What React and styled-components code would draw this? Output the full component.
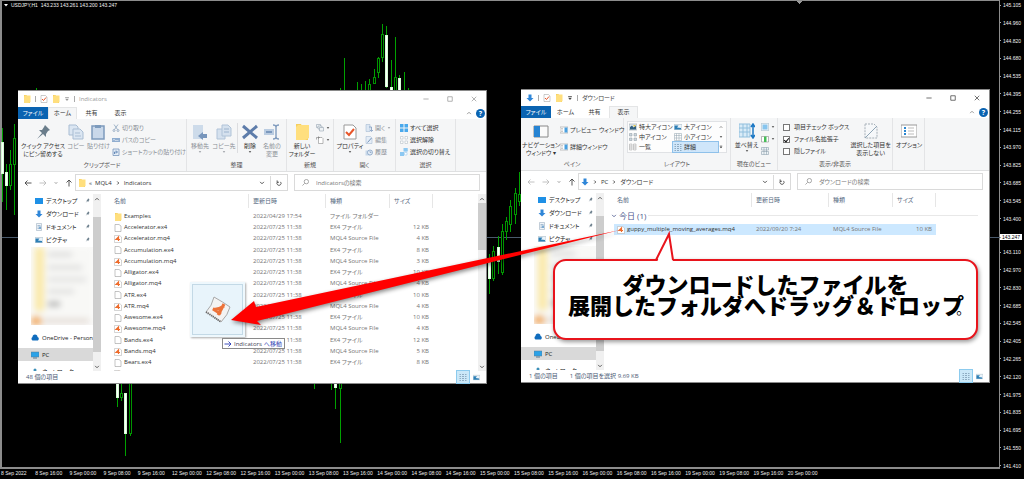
import styled, { createGlobalStyle, css } from 'styled-components';

const GlobalStyle = createGlobalStyle`
  * { box-sizing: border-box; }
  body {
    margin: 0;
    background: #000;
    font-family: 'Open Sans', 'Noto Sans CJK JP', sans-serif;
    font-size: 6px;
    line-height: 8px;
    font-feature-settings: 'palt';
    color: #333;
  }
  button, input {
    font: inherit;
    font-feature-settings: inherit;
    color: inherit;
    margin: 0;
    padding: 0;
    border: 0;
    background: none;
  }
`;

/* ---------- chart ---------- */

const Screen = styled.main`
  position: relative;
  display: grid;
  grid-template-columns: minmax(0, 1fr) 24px;
  grid-template-rows: 1fr 10px;
  min-height: 100vh;
  overflow: hidden;
  background: #000;
`;

const ChartArea = styled.section`
  border: solid #8c8c8c;
  border-width: 1px 1px 2px 2px;
  min-width: 0;
`;

const ChartTitle = styled.header`
  display: flex;
  gap: 3px;
  height: 8px;
  padding-left: 2px;
  font: 5px/8px 'Liberation Sans', sans-serif;
  color: #f4f4f4;
  white-space: pre;
`;

const Layer = styled.svg`
  position: absolute;
  top: 0;
  left: 0;
  pointer-events: none;
`;

const PriceAxis = styled.ol`
  grid-row: 1 / 3;
  grid-column: 2;
  display: flex;
  flex-direction: column;
  justify-content: space-between;
  margin: 1px 0 9px;
  padding: 0;
  list-style: none;
  font: 5px/8px 'Liberation Sans', sans-serif;
  color: #f0f0f0;
`;

const Price = styled.li`
  display: flex;
  align-items: center;
  height: 8px;
  gap: 2px;
  &::before {
    content: '';
    width: 1px;
    height: 1px;
    background: #aaa;
  }
  ${p => p.$current && css`
    position: relative;
    top: 2px;
    height: 6px;
    gap: 1px;
    margin-right: 2px;
    background: #fff;
    color: #000;
  `}
`;

const TimeAxis = styled.ol`
  grid-row: 2;
  grid-column: 1;
  display: grid;
  grid-template-columns: repeat(24, 1fr);
  margin: 0 178px 0 0;
  padding: 0 0 0 1px;
  list-style: none;
  font: 5px/9px 'Liberation Sans', sans-serif;
  color: #f0f0f0;
  white-space: nowrap;
`;

const prices = [
  '145.105', '144.960', '144.820', '144.680', '144.535', '144.395', '144.255', '144.115', '143.970',
  '143.825', '143.685', '143.545', '143.400', '143.247', '143.110', '142.970', '142.830', '142.685',
  '142.545', '142.405', '142.265', '142.120', '141.975', '141.835', '141.695', '141.550', '141.410',
];

const days = ['8', '9', '12', '13', '14', '15', '16', '19', '20'];
const times = days
  .flatMap(day => ['00:00', '08:00', '16:00'].map(hour => `${day} Sep ${hour}`))
  .slice(1, 25);
times[0] = '8 Sep 2022';

// x, high, low, body top, body bottom, falling
const candles = [
  [2, 128, 202, 142, 174, 1], [6, 164, 210, 172, 186, 1], [10, 150, 190, 164, 186, 0],
  [14, 124, 215, 138, 165, 0], [36, 88, 92],
  [117, 380, 407, 380, 398, 1], [121, 380, 401, 393, 398, 0], [125, 393, 456, 393, 434, 1],
  [130, 380, 436, 380, 434, 0],
  [314, 380, 389], [331, 380, 390], [335, 380, 409, 380, 388, 1], [340, 380, 443, 380, 389, 0],
  [340, 88, 92], [344, 58, 92], [357, 82, 92], [361, 84, 92], [365, 81, 92],
  [369, 79, 92, 84, 92, 0], [374, 69, 84, 77, 84, 0], [378, 57, 78, 58, 73, 0],
  [382, 24, 62, 34, 58, 0], [386, 26, 88, 35, 87, 1], [391, 60, 92, 87, 92, 1],
  [395, 37, 92, 77, 92, 0], [399, 75, 92, 78, 92, 1], [404, 72, 92], [408, 88, 92],
  [489, 254, 294, 262, 279, 1], [493, 246, 281, 251, 279, 0], [498, 236, 274, 247, 262, 1],
  [502, 224, 275, 231, 273, 0], [506, 217, 240, 221, 232, 0], [510, 200, 232, 206, 225, 0],
  [515, 188, 224, 193, 215, 0], [519, 172, 206, 194, 202, 0],
];

const Candles = () => (
  <Layer width="1024" height="470" shapeRendering="crispEdges" aria-hidden="true">
    <path d="M2 237H1000" stroke="#4a5a6c" />
    <path d="M796 1h6l-3 3z" fill="#999" />
    {candles.map(([x, high, low, top, bottom, falling]) => (
      <g key={`${x}-${high}`} stroke="#00a000">
        <path d={`M${x + 0.5} ${high}V${low}`} />
        {top && (
          <rect
            x={x - 0.5}
            y={top + 0.5}
            width="2"
            height={bottom - top - 1}
            fill={falling ? '#fff' : '#000'}
            stroke={falling ? '#d6ffd6' : '#009400'}
          />
        )}
      </g>
    ))}
  </Layer>
);

/* ---------- icons ---------- */

const drawings = {
  folder: <><path d="M2 0h5l1 2h6v14H2z" fill="#f5cf5f" /><path d="M4 1h11v13l-4 2H2V3z" fill="#ffdf7e" /></>,
  doc: <path d="M2 1h8l4 3v11H2z" fill="#fff" stroke="#888" />,
  mq4: <><path d="M1 1h10l4 3v11H1z" fill="#fff" stroke="#aaa" /><path d="M9 12V4L4 9h8" fill="none" stroke="#ee6c2c" strokeWidth="2.4" /></>,
  check: <><path d="M2 1h9l3 3v11H2z" fill="#fff" stroke="#999" /><path d="M4 8l3 3 5-6" fill="none" stroke="#e8562a" strokeWidth="2" /></>,
  down: <path d="M5 1h6v7h4l-7 7-7-7h4z" fill="#2f86d8" />,
  desktop: <path d="M0 2h16v12H0z" fill="#1e90e6" />,
  document: <><path d="M3 1h10v14H3z" fill="#f1f5f9" stroke="#8fa3b6" /><path d="M5 5h6M5 8h3M5 11h6" stroke="#5d87ad" /><path d="M8 7h4v5H8z" fill="#7dabd2" /></>,
  picture: <><path d="M0 3h16v10H0z" fill="#eaf3fa" stroke="#9fb0bd" /><path d="M1 5h8l-3 4 8 1v3H1z" fill="#2d7fb5" /></>,
  pin: <path d="M10 1l5 5-2 1-2 3 0 3-3-3-6 5 5-6-3-3h3l2-3z" fill="#6a7d8b" />,
  cloud: <path d="M3 13a4 4 0 010-7 5 5 0 0110 0 4 4 0 011 7z" fill="#0f6cbd" />,
  pc: <><path d="M0 2h16v10H0z" fill="#2ba2e8" stroke="#5c7a90" /><path d="M4 14h8" stroke="#5c7a90" strokeWidth="2" /></>,
  network: <><path d="M3 6h12v7H3z" fill="#4aa8dc" /><circle cx="8" cy="4" r="3" fill="#3c8fb8" /></>,
  copy: <g fill="#dbe6f2" stroke="#a9bdd3"><path d="M1 1h7l2 2v8H1z" /><path d="M5 5h7l3 3v7H5z" /><path d="M7 9h5M7 12h6" /></g>,
  paste: <><path d="M2 2h12v13H2z" fill="#c9d8ea" stroke="#7d9bbd" strokeWidth="1.5" /><path d="M5 1h6v3H5z" fill="#7d9bbd" /></>,
  cut: <g fill="none" stroke="#8ca3bd" strokeWidth="1.6"><path d="M4 1l7 10M12 1L5 11" /><circle cx="4" cy="13" r="2" /><circle cx="12" cy="13" r="2" /></g>,
  path: <><path d="M0 4h16v8H0z" fill="#91aed0" /><path d="M2 9l2-3 2 3h7" stroke="#fff" fill="none" /></>,
  shortcut: <><path d="M2 2h12v13H2z" fill="#e6eef7" stroke="#7191b8" strokeWidth="1.5" /><path d="M5 12V8h5M8 5l3 3-3 3" fill="none" stroke="#4a73a8" strokeWidth="1.6" /></>,
  moveTo: <><path d="M1 1h10v14H1z" fill="#cddbea" /><path d="M15 10v4h-4v2l-5-4 5-4v2z" fill="#7896bc" /></>,
  copyTo: <><g fill="#d5e1ee" stroke="#b0c3d8"><path d="M1 5h8v10H1z" /><path d="M6 1h6l3 3v8H6z" /></g><path d="M8 5h5M8 8h5" stroke="#9cb3cd" /></>,
  remove: <path d="M1 2l14 12M15 2L1 14" stroke="#5d7caa" strokeWidth="3" />,
  rename: <><path d="M0 5h10v6H0z" fill="#bacce1" /><path d="M2 8h6" stroke="#7b98bd" strokeWidth="2" /><path d="M9 1q3 0 3 2v10q0 2-3 2M15 1q-3 0-3 2v10q0 2 3 2" fill="none" stroke="#819cbe" strokeWidth="1.4" /></>,
  newItem: <g fill="#eef2f5" stroke="#8796a4"><path d="M1 1h8v6H1z" /><path d="M4 4h8v6H4z" /><path d="M7 7h8v7H7z" /></g>,
  access: <><path d="M5 3h7l2 2v10H5z" fill="#fff" stroke="#777" /><path d="M1 7V3h5M4 1l3 2-3 2" fill="none" stroke="#666" /></>,
  openFile: <><path d="M2 1h8v14H2z" fill="#dce7f3" stroke="#9bb2cc" /><path d="M8 6h5v8M10 12l3 3 3-3" fill="none" stroke="#7896bc" strokeWidth="1.5" /></>,
  edit: <><path d="M2 1h9l3 3v11H2z" fill="#e5edf6" stroke="#9bb2cc" /><path d="M5 13l8-9" stroke="#7896bc" strokeWidth="2" /></>,
  history: <><path d="M1 5h8l2 2v8H1z" fill="#c8d8e9" /><circle cx="10" cy="9" r="5" fill="#e5edf6" stroke="#7f9cc0" strokeWidth="1.5" /><path d="M10 6v3h3" fill="none" stroke="#5d80ad" /></>,
  selectAll: <g fill="#4aa9ec"><path d="M0 0h7v7H0zM9 0h7v7H9zM0 9h7v7H0zM9 9h7v7H9z" /></g>,
  selectNone: <g fill="#fff" stroke="#aab4bd"><path d="M1 1h5v5H1zM10 1h5v5h-5zM1 10h5v5H1zM10 10h5v5h-5z" /></g>,
  invert: <><path d="M1 9h5v6H1zM9 1h6v5H9z" fill="#fff" stroke="#8fc2e8" /><path d="M7 0h8v7H7zM0 8h8v8H0z" fill="#8cc8f2" /><path d="M9 9h5v5H9z" fill="#fff" stroke="#8fc2e8" /></>,
  navPane: <><path d="M1 3h14v11H1z" fill="#fafafa" stroke="#888" /><path d="M1 3h6v11H1z" fill="#2684d3" /></>,
  previewPane: <><path d="M0 2h16v12H0z" fill="#fff" stroke="#888" /><path d="M9 3h6v10H9z" fill="#49a0e0" /><path d="M2 5h4M2 8h4M2 11h4" stroke="#999" /></>,
  largeIcon: <><path d="M0 2h16v12H0z" fill="#e4ebef" stroke="#8b969e" /><path d="M2 8l4-3 3 4 5-4v8H2z" fill="#305f80" /><path d="M9 4h4v3H9z" fill="#e3c94a" /></>,
  mediumIcon: <g fill="#ccd6de" stroke="#8b969e"><path d="M1 1h5v5H1zM10 1h5v5h-5zM1 10h5v5H1zM10 10h5v5h-5z" /></g>,
  smallIcon: <g fill="none" stroke="#8fa0ad"><path d="M1 1h14v14H1zM1 5h14M1 10h14M5 1v14M10 1v14" /></g>,
  list: <g fill="#f4f4f4" stroke="#a0a0a0"><path d="M1 2h5v12H1zM9 2h5v12H9zM1 6h5M1 10h5M9 6h5M9 10h5" /></g>,
  details: <path d="M1 3h3M6 3h4M12 3h3M1 7h3M6 7h4M12 7h3M1 11h3M6 11h4M12 11h3M1 15h3M6 15h4M12 15h3" stroke="#7f9cb4" strokeWidth="1.6" />,
  sort: <><path d="M0 1h11v13H0z" fill="#d9ebf7" /><path d="M0 1h11v13H0zM0 5h11M0 9h11M4 1v13M8 1v13" fill="none" stroke="#91bfdd" /><path d="M14 1v14M12 4l2-3 2 3M12 12l2 3 2-3" fill="none" stroke="#1d78c4" strokeWidth="1.5" /></>,
  group: <><path d="M3 3h10v10H3z" fill="#87c5ee" /><path d="M0 1h16M0 15h16M1 1v14M15 1v14" stroke="#9cb8c9" /></>,
  addColumn: <><path d="M1 3h14v11H1z" fill="#fff" stroke="#777" /><path d="M6 3h5v11H6z" fill="#44bd57" /></>,
  fitColumn: <><path d="M1 1h14v5H1zM1 9h14v6H1z" fill="#eef3f6" stroke="#7d92a2" /><path d="M6 1v14M11 1v14" stroke="#7d92a2" /></>,
  hide: <><path d="M2 1h9l3 3v11H2z" fill="#f6f8fa" stroke="#a5afb7" strokeDasharray="2 1" /><path d="M2 15L14 3" stroke="#8fa5b5" /></>,
  options: <><path d="M0 2h16v12H0z" fill="#fff" stroke="#999" /><path d="M3 5h2M3 8h2M3 11h2" stroke="#2a86d0" strokeWidth="2" /><path d="M7 5h6M7 8h6M7 11h6" stroke="#bbb" /></>,
  back: <path d="M15 8H2M7 3L2 8l5 5" fill="none" stroke="currentColor" strokeWidth="1.8" />,
  forward: <path d="M1 8h13M9 3l5 5-5 5" fill="none" stroke="currentColor" strokeWidth="1.8" />,
  upward: <path d="M8 15V2M3 7l5-5 5 5" fill="none" stroke="currentColor" strokeWidth="1.8" />,
  chevron: <path d="M3 5l5 5 5-5" fill="none" stroke="currentColor" strokeWidth="2.2" />,
  chevronUp: <path d="M3 11l5-5 5 5" fill="none" stroke="currentColor" strokeWidth="2.2" />,
  chevronRight: <path d="M6 4l4 4-4 4" fill="none" stroke="currentColor" strokeWidth="2.2" />,
  caret: <path d="M3 5h10l-5 6z" fill="currentColor" />,
  customize: <path d="M3 3h10v2H3zM3 7h10l-5 6z" fill="currentColor" />,
  refresh: <path d="M4 5a5.5 5.5 0 108 0M3 1v5h5" fill="none" stroke="currentColor" strokeWidth="2" />,
  search: <><circle cx="10" cy="6" r="5" fill="none" stroke="currentColor" strokeWidth="1.4" /><path d="M6 10l-5 5" stroke="currentColor" strokeWidth="1.4" /></>,
  minimize: <path d="M1 8h14" stroke="currentColor" strokeWidth="2" />,
  maximize: <path d="M2 2h12v12H2z" fill="none" stroke="currentColor" strokeWidth="2" />,
  close: <path d="M2 2l12 12M14 2L2 14" stroke="currentColor" strokeWidth="2" />,
};

const Icon = ({ name, size = 8 }) => (
  <svg width={size} height={size} viewBox="0 0 16 16" aria-hidden="true">{drawings[name]}</svg>
);

/* ---------- explorer window ---------- */

const Desktop = styled.div`
  display: flex;
  align-items: flex-start;
  gap: 34px;
  padding: 80px 9px 0 16px;
`;

const Window = styled.article`
  position: relative;
  flex: 1;
  min-width: 0;
  margin-top: ${p => (p.$lower ? 1 : 0)}px;
  border: 1px solid #8a8a8a;
  border-width: 1px 1px 1px 0;
  background: #fff;
  white-space: nowrap;
  svg { display: block; flex: none; }
`;

const TitleBar = styled.header`
  display: flex;
  align-items: center;
  gap: 4px;
  height: 16px;
  padding-left: 5px;
  color: ${p => (p.$active ? '#444' : '#999')};
`;

const Divider = styled.span`
  width: 1px;
  height: 6px;
  background: #aaa;
`;

const WindowButtons = styled.div`
  display: flex;
  margin-left: auto;
  button {
    display: grid;
    place-items: center;
    width: 24px;
    height: 16px;
  }
`;

const Tabs = styled.nav`
  display: flex;
  align-items: center;
  height: 12px;
`;

const Tab = styled.button`
  width: ${p => (p.$file ? 30 : 29)}px;
  height: 12px;
  line-height: 11px;
  ${p => p.$file && 'background: #0a63b1; color: #fff;'}
  ${p => p.$selected && 'background: #f5f6f7; border: 1px solid #e4e5e6; border-bottom: 0;'}
`;

const TabTools = styled.div`
  display: flex;
  align-items: center;
  gap: 4px;
  margin-left: auto;
  padding-right: 1px;
  color: #888;
`;

const Help = styled.button`
  width: 9px;
  height: 9px;
  border-radius: 50%;
  background: #0a63b1;
  color: #fff;
  font-weight: 700;
  font-size: 7px;
  line-height: 9px;
`;

const Ribbon = styled.div`
  display: flex;
  height: 53px;
  background: #f5f6f7;
  border-bottom: 1px solid #dfe0e1;
`;

const Group = styled.section`
  display: flex;
  flex-direction: column;
  width: ${p => p.$width}px;
  border-right: 1px solid #e3e4e6;
  footer {
    height: 10px;
    line-height: 9px;
    text-align: center;
    color: #555;
  }
`;

const GroupBody = styled.div`
  display: flex;
  height: 42px;
  padding: 3px 0 0 ${p => p.$indent ?? 2}px;
`;

const BigButton = styled.button`
  display: flex;
  flex-direction: column;
  align-items: center;
  width: ${p => p.$width || 24}px;
  padding-top: 2px;
  color: ${p => (p.$off ? '#8a8f96' : '#333')};
  svg:first-child { margin-bottom: 2px; }
`;

const Stack = styled.div`
  display: flex;
  flex-direction: column;
  padding-left: ${p => p.$indent || 0}px;
`;

const SmallButton = styled.button`
  display: flex;
  align-items: center;
  gap: 2px;
  height: ${p => (p.$tall ? 17 : 12)}px;
  color: ${p => (p.$off ? '#8a8f96' : '#333')};
`;

const Split = styled.span`
  width: 1px;
  height: 30px;
  margin: 1px 1px 0;
  background: #dcdde0;
`;

const Gallery = styled.div`
  display: grid;
  grid-template-columns: 45px 45px 8px;
  grid-auto-rows: 10px;
  width: 100px;
  height: 32px;
  border: 1px solid #e0e2e5;
  background: #fdfdfd;
`;

const GalleryItem = styled.button`
  display: flex;
  align-items: center;
  gap: 2px;
  padding-left: 1px;
  ${p => p.$selected && 'background: #cfe6fa; outline: 1px solid #8fc1ea;'}
`;

const CheckLabel = styled.label`
  display: flex;
  align-items: center;
  gap: 4px;
  height: 12px;
`;

const CheckBox = styled.input`
  appearance: none;
  display: grid;
  place-items: center;
  width: 7px;
  height: 7px;
  border: 1px solid #777;
  background: #fff;
  &:checked::before {
    content: '';
    width: 2px;
    height: 4px;
    border: solid #111;
    border-width: 0 1px 1px 0;
    transform: rotate(40deg);
  }
`;

const AddressRow = styled.div`
  display: flex;
  align-items: center;
  height: 22px;
  padding: 0 6px 1px 0;
`;

const History = styled.div`
  display: flex;
  align-items: center;
  gap: 7px;
  width: 57px;
  padding-left: 6px;
  color: #444;
  button:disabled { color: #bbb; }
`;

const AddressBar = styled.div`
  display: flex;
  align-items: center;
  flex: 216;
  gap: 3px;
  height: 17px;
  margin-right: 6px;
  padding-left: 2px;
  border: 1px solid #dadada;
  > button:nth-last-child(2) { margin-left: auto; padding-right: 2px; }
  > button:last-child { padding: 4px 5px; border-left: 1px solid #dadada; }
`;

const SearchBox = styled.label`
  display: flex;
  align-items: center;
  flex: 183;
  gap: 7px;
  height: 17px;
  padding-left: 7px;
  border: 1px solid #dadada;
  color: #777;
  input { flex: 1; min-width: 0; outline: 0; }
  input::placeholder { color: #777; }
`;

const Body = styled.div`
  display: flex;
  height: 177px;
  overflow: hidden;
`;

const Side = styled.nav`
  width: 75px;
`;

const SideItem = styled.a`
  display: flex;
  align-items: center;
  gap: 3px;
  height: 13px;
  padding-left: ${p => (p.$root ? 13 : 17)}px;
  padding-right: 3px;
  margin-bottom: ${p => (p.$root ? 4 : 0)}px;
  overflow: hidden;
  color: #222;
  text-decoration: none;
  ${p => p.$selected && 'background: #d9d9d9;'}
  span + svg { margin-left: auto; }
`;

const Blurred = styled.div`
  height: 78px;
  margin: 1px 0 6px 13px;
  overflow: hidden;
  background: #fafafa;
  &::before {
    content: '';
    display: block;
    height: 78px;
    filter: blur(3px);
    background:
      radial-gradient(circle at 5px 75px, #f0a860 0 5px, transparent 6px),
      linear-gradient(#fbe9a8, #fbe9a8) 4px 0 / 9px 64px no-repeat,
      linear-gradient(#cfcfcf, #cfcfcf) 17px 6px / 24px 3px no-repeat,
      linear-gradient(#d2d2d2, #d2d2d2) 17px 19px / 34px 3px no-repeat,
      linear-gradient(#d6d6d6, #d6d6d6) 17px 31px / 38px 3px no-repeat,
      linear-gradient(#d2d2d2, #d2d2d2) 17px 43px / 26px 3px no-repeat,
      linear-gradient(#a5a5a5, #a5a5a5) 17px 55px / 12px 4px no-repeat,
      linear-gradient(#e0d6cf, #e0d6cf) 12px 72px / 46px 4px no-repeat,
      #f8f8f6;
  }
`;

const Scroll = styled.div`
  display: flex;
  flex-direction: column;
  align-items: center;
  justify-content: space-between;
  width: 8px;
  padding: 2px 0 1px;
  background: #f0f0f0;
  color: #444;
`;

const Thumb = styled.span`
  width: 8px;
  height: ${p => p.$size}px;
  margin-bottom: auto;
  margin-top: ${p => p.$offset}px;
  background: #cdcdcd;
`;

const Files = styled.div`
  flex: 1;
  min-width: 0;
  padding-left: 10px;
`;

const FileTable = styled.table`
  width: 322px;
  table-layout: fixed;
  border-spacing: 0;
  color: #757575;
  th {
    height: 14px;
    padding: 0 0 0 4px;
    border-right: 1px solid #e6e6e6;
    text-align: left;
    font-weight: 400;
    color: #56697f;
  }
  td {
    height: 11px;
    padding: 0 0 0 4px;
    line-height: 11px;
  }
  th:first-child, td:first-child { padding-left: 3px; }
  td:last-child { padding: 0 4px 0 0; text-align: right; }
  tbody tr:nth-child(4n) td { height: 12px; }
  tbody::before {
    content: '';
    display: block;
    height: ${p => (p.$grouped ? 0 : 3)}px;
  }
`;

const FileName = styled.span`
  display: flex;
  align-items: center;
  gap: 2px;
  color: #333;
`;

const FileRow = styled.tr`
  ${p => p.$selected && 'background: #cce8ff;'}
`;

const DayHeading = styled.td`
  && {
    height: 17px;
    padding: 0;
    font-size: 8px;
    text-align: left;
    color: #48558c;
  }
  > div {
    display: flex;
    align-items: center;
    gap: 2px;
    margin: 0 -46px 0 -3px;
  }
  > div::after {
    content: '';
    flex: 1;
    height: 1px;
    background: #e8e8e8;
  }
`;

const StatusBar = styled.footer`
  display: flex;
  align-items: center;
  gap: 12px;
  height: 12px;
  padding: 0 4px 0 8px;
  color: #4a5a75;
`;

const Views = styled.div`
  display: flex;
  align-items: center;
  gap: 2px;
  margin-left: auto;
  button { padding: 2px; }
  button:first-child { background: #cbe8f8; outline: 1px solid #8ccbee; }
`;

const Big = ({ icon, lines, caret, ...rest }) => (
  <BigButton {...rest}>
    <Icon name={icon} size={16} />
    {lines.map(line => <span key={line}>{line}</span>)}
    {caret && <Icon name="caret" size={4} />}
  </BigButton>
);

const Small = ({ icon, children, caret, ...rest }) => (
  <SmallButton {...rest}>
    <Icon name={icon} />
    {children}
    {caret && <Icon name="caret" size={4} />}
  </SmallButton>
);

const RibbonGroup = ({ label, width, indent, children }) => (
  <Group $width={width}>
    <GroupBody $indent={indent}>{children}</GroupBody>
    <footer>{label}</footer>
  </Group>
);

const HomeRibbon = () => (
  <Ribbon>
    <RibbonGroup label="クリップボード" width={169} indent={2}>
      <Big icon="pin" lines={['クイック アクセス', 'にピン留めする']} $width={46} />
      <Big icon="copy" lines={['コピー']} $width={20} $off />
      <Big icon="paste" lines={['貼り付け']} $width={25} $off />
      <Stack $indent={1}>
        <Small icon="cut" $off>切り取り</Small>
        <Small icon="path" $off>パスのコピー</Small>
        <Small icon="shortcut" $off>ショートカットの貼り付け</Small>
      </Stack>
    </RibbonGroup>
    <RibbonGroup label="整理" width={100} indent={1}>
      <Big icon="moveTo" lines={['移動先']} caret $off />
      <Big icon="copyTo" lines={['コピー先']} caret $off />
      <Split />
      <Big icon="remove" lines={['削除']} caret $width={22} />
      <Big icon="rename" lines={['名前の', '変更']} $width={22} $off />
    </RibbonGroup>
    <RibbonGroup label="新規" width={47}>
      <Big icon="folder" lines={['新しい', 'フォルダー']} $width={26} />
      <Stack $indent={1}>
        <Small icon="newItem" caret aria-label="新しいアイテム" />
        <Small icon="access" caret aria-label="ショートカット" />
      </Stack>
    </RibbonGroup>
    <RibbonGroup label="開く" width={62}>
      <Big icon="check" lines={['プロパティ']} caret $width={28} />
      <Stack $indent={1}>
        <Small icon="openFile" caret $off>開く</Small>
        <Small icon="edit" $off>編集</Small>
        <Small icon="history" $off>履歴</Small>
      </Stack>
    </RibbonGroup>
    <RibbonGroup label="選択" width={60} indent={4}>
      <Stack>
        <Small icon="selectAll">すべて選択</Small>
        <Small icon="selectNone">選択解除</Small>
        <Small icon="invert">選択の切り替え</Small>
      </Stack>
    </RibbonGroup>
  </Ribbon>
);

const ViewRibbon = () => (
  <Ribbon>
    <RibbonGroup label="ペイン" width={103} indent={1}>
      <Big icon="navPane" lines={['ナビゲーション', 'ウィンドウ ▾']} $width={38} />
      <Stack>
        <Small icon="previewPane" $tall>プレビュー ウィンドウ</Small>
        <Small icon="previewPane" $tall>詳細ウィンドウ</Small>
      </Stack>
    </RibbonGroup>
    <RibbonGroup label="レイアウト" width={107} indent={3}>
      <Gallery>
        <GalleryItem><Icon name="largeIcon" />特大アイコン</GalleryItem>
        <GalleryItem><Icon name="picture" />大アイコン</GalleryItem>
        <GalleryItem aria-label="上へ"><Icon name="chevronUp" size={4} /></GalleryItem>
        <GalleryItem><Icon name="mediumIcon" />中アイコン</GalleryItem>
        <GalleryItem><Icon name="smallIcon" />小アイコン</GalleryItem>
        <GalleryItem aria-label="下へ"><Icon name="caret" size={4} /></GalleryItem>
        <GalleryItem><Icon name="list" />一覧</GalleryItem>
        <GalleryItem $selected><Icon name="details" />詳細</GalleryItem>
        <GalleryItem aria-label="その他"><Icon name="customize" size={4} /></GalleryItem>
      </Gallery>
    </RibbonGroup>
    <RibbonGroup label="現在のビュー" width={47}>
      <Big icon="sort" lines={['並べ替え']} caret $width={27} />
      <Stack $indent={1}>
        <Small icon="group" caret aria-label="グループ化" />
        <Small icon="addColumn" caret aria-label="列の追加" />
        <Small icon="fitColumn" aria-label="列のサイズ" />
      </Stack>
    </RibbonGroup>
    <RibbonGroup label="表示/非表示" width={115} indent={5}>
      <Stack>
        <CheckLabel><CheckBox type="checkbox" />項目チェック ボックス</CheckLabel>
        <CheckLabel><CheckBox type="checkbox" defaultChecked />ファイル名拡張子</CheckLabel>
        <CheckLabel><CheckBox type="checkbox" />隠しファイル</CheckLabel>
      </Stack>
      <Big icon="hide" lines={['選択した項目を', '表示しない']} $width={44} />
    </RibbonGroup>
    <RibbonGroup width={32} indent={2}>
      <Big icon="options" lines={['オプション']} $width={28} />
    </RibbonGroup>
  </Ribbon>
);

const quickLinks = [
  ['desktop', 'デスクトップ'],
  ['down', 'ダウンロード'],
  ['document', 'ドキュメント'],
  ['picture', 'ピクチャ'],
];

const Explorer = ({ title, titleIcon, active, lower, tab, ribbon, crumbs, search, status, scrollable, children }) => (
  <Window $lower={lower}>
    <TitleBar $active={active}>
      <Icon name={titleIcon} />
      <Divider />
      <Icon name="check" />
      <Icon name="folder" />
      <Icon name="customize" size={6} />
      <Divider />
      {title}
      <WindowButtons>
        <button aria-label="最小化"><Icon name="minimize" size={6} /></button>
        <button aria-label="最大化"><Icon name="maximize" size={6} /></button>
        <button aria-label="閉じる"><Icon name="close" size={6} /></button>
      </WindowButtons>
    </TitleBar>
    <Tabs>
      <Tab $file>ファイル</Tab>
      {['ホーム', '共有', '表示'].map(name => <Tab key={name} $selected={name === tab}>{name}</Tab>)}
      <TabTools>
        <Icon name="chevronUp" size={6} />
        <Help>?</Help>
      </TabTools>
    </Tabs>
    {ribbon}
    <AddressRow>
      <History>
        <button aria-label="戻る" disabled={active}><Icon name="back" /></button>
        <button aria-label="進む" disabled><Icon name="forward" /></button>
        <button aria-label="履歴"><Icon name="chevron" size={4} /></button>
        <button aria-label="上へ"><Icon name="upward" /></button>
      </History>
      <AddressBar>
        <Icon name={titleIcon} />
        {crumbs}
        <button aria-label="候補"><Icon name="chevron" size={6} /></button>
        <button aria-label="更新"><Icon name="refresh" size={6} /></button>
      </AddressBar>
      <SearchBox>
        <Icon name="search" size={7} />
        <input type="text" placeholder={search} />
      </SearchBox>
    </AddressRow>
    <Body>
      <Side>
        {quickLinks.map(([icon, label]) => (
          <SideItem key={label} href="#"><Icon name={icon} /><span>{label}</span><Icon name="pin" size={5} /></SideItem>
        ))}
        <Blurred />
        <SideItem href="#" $root><Icon name="cloud" />OneDrive - Person</SideItem>
        <SideItem href="#" $root $selected><Icon name="pc" />PC</SideItem>
        <SideItem href="#" $root><Icon name="network" />ネットワーク</SideItem>
      </Side>
      <Scroll>
        <Icon name="chevronUp" size={6} />
        <Thumb $size={135} $offset={15} />
        <Icon name="chevron" size={6} />
      </Scroll>
      <Files>{children}</Files>
      {scrollable && (
        <Scroll>
          <Icon name="chevronUp" size={6} />
          <Thumb $size={47} $offset={1} />
          <Icon name="chevron" size={6} />
        </Scroll>
      )}
    </Body>
    <StatusBar>
      {status.map(text => <span key={text}>{text}</span>)}
      <Views>
        <button aria-label="詳細"><Icon name="details" /></button>
        <button aria-label="大アイコン"><Icon name="picture" size={7} /></button>
      </Views>
    </StatusBar>
  </Window>
);

const Columns = () => (
  <>
    <colgroup>
      <col width="138" />
      <col width="77" />
      <col width="64" />
      <col width="43" />
    </colgroup>
    <thead>
      <tr><th>名前</th><th>更新日時</th><th>種類</th><th>サイズ</th></tr>
    </thead>
  </>
);

const File = ({ name, date, size, selected }) => {
  const ext = name.split('.')[1];
  const icon = { ex4: 'doc', mq4: 'mq4' }[ext] || 'folder';
  const type = { ex4: 'EX4 ファイル', mq4: 'MQL4 Source File' }[ext] || 'ファイル フォルダー';
  return (
    <FileRow $selected={selected}>
      <td><FileName><Icon name={icon} />{name}</FileName></td>
      <td>{date}</td>
      <td>{type}</td>
      <td>{size && `${size} KB`}</td>
    </FileRow>
  );
};

const files = [
  ['Accelerator.ex4', 12], ['Accelerator.mq4', 4], ['Accumulation.ex4', 8], ['Accumulation.mq4', 3],
  ['Alligator.ex4', 10], ['Alligator.mq4', 4], ['ATR.ex4', 10], ['ATR.mq4', 4], ['Awesome.ex4', 10],
  ['Awesome.mq4', 4], ['Bands.ex4', 12], ['Bands.mq4', 5], ['Bears.ex4', 8],
];

/* ---------- drag and callout ---------- */

const DragGhost = styled.div`
  position: absolute;
  top: 282px;
  left: 190px;
  display: grid;
  place-items: center;
  width: 55px;
  height: 55px;
  border: 2px solid #eef8fd;
  outline: 1px solid #c3d9e6;
  outline-offset: -3px;
  background: #e4f2fadd;
  box-shadow: 1px 1px 2px #0005;
`;

const DropHint = styled.div`
  position: absolute;
  top: 338px;
  left: 222px;
  display: flex;
  align-items: center;
  gap: 2px;
  height: 11px;
  padding: 0 2px 0 1px;
  border: 1px solid #8a8a8a;
  background: #fff;
  color: #2a3cb4;
  white-space: nowrap;
  span { color: #445; }
`;

const Callout = styled.p`
  position: absolute;
  top: 259px;
  left: 553px;
  width: 425px;
  margin: 0;
  padding: 12px 0 19px;
  border: 2px solid #e8141c;
  border-radius: 13px;
  background: #fff;
  box-shadow: 1px 2px 4px #0006;
  font: 900 22px/21px 'Noto Sans CJK JP', sans-serif;
  font-feature-settings: normal;
  text-align: center;
  white-space: nowrap;
  color: #000;
`;

const FullStop = styled.span`
  margin-left: -8px;
  font-size: 14px;
  font-weight: 400;
  font-feature-settings: 'palt';
`;

const App = () => (
  <>
    <GlobalStyle />
    <Screen>
      <Candles />
      <ChartArea>
        <ChartTitle>
          <svg width="4" height="8" viewBox="0 0 4 8"><path d="M0 3h4L2 5.5z" fill="#fff" /></svg>
          {'USDJPY,H1  143.233 143.261 143.200 143.247'}
        </ChartTitle>
        <Desktop>
          <Explorer
            title="Indicators"
            titleIcon="folder"
            lower
            tab="ホーム"
            ribbon={<HomeRibbon />}
            crumbs={<>
              <span>«</span>
              <span>MQL4</span>
              <Icon name="chevronRight" size={6} />
              <span>Indicators</span>
            </>}
            search="Indicatorsの検索"
            status={['48 個の項目']}
            scrollable
          >
            <FileTable>
              <Columns />
              <tbody>
                <File name="Examples" date="2022/04/29 17:54" />
                {files.map(([name, size]) => <File key={name} name={name} date="2022/07/25 11:38" size={size} />)}
                <File name="Bears.mq4" date="2022/07/25 11:38" size={4} />
              </tbody>
            </FileTable>
          </Explorer>
          <Explorer
            title="ダウンロード"
            titleIcon="down"
            active
            tab="表示"
            ribbon={<ViewRibbon />}
            crumbs={<>
              <Icon name="chevronRight" size={6} />
              <span>PC</span>
              <Icon name="chevronRight" size={6} />
              <span>ダウンロード</span>
            </>}
            search="ダウンロードの検索"
            status={['1 個の項目', '1 個の項目を選択  9.69 KB']}
          >
            <FileTable $grouped>
              <Columns />
              <tbody>
                <tr>
                  <DayHeading colSpan={4}><div><Icon name="chevron" size={6} />今日 (1)</div></DayHeading>
                </tr>
                <File name="guppy_multiple_moving_averages.mq4" date="2022/09/20 7:24" size={10} selected />
              </tbody>
            </FileTable>
          </Explorer>
        </Desktop>
      </ChartArea>
      <PriceAxis>
        {prices.map(price => <Price key={price} $current={price === '143.247'}>{price}</Price>)}
      </PriceAxis>
      <TimeAxis>
        {times.map(time => <li key={time}>{time}</li>)}
      </TimeAxis>

      <DragGhost>
        <svg width="28" height="28" viewBox="0 0 28 28">
          <path d="M10 1q9 5 16 10-2 8-9 15Q10 21 2 16 8 10 10 1z" fill="#f3f3f3" stroke="#a8a8a8" />
          <path d="M2 16q8 5 15 10" stroke="#666" strokeWidth="2" strokeDasharray="1 1" fill="none" />
          <path d="M20 10q-6 4-11 3l8 5M20 8q-3 6-6 11" stroke="#ec7239" strokeWidth="3" fill="none" />
        </svg>
      </DragGhost>
      <DropHint><Icon name="forward" /><span>Indicators</span>へ移動</DropHint>
      <Callout>
        ダウンロードしたファイルを<br />
        展開したフォルダへドラッグ＆ドロップ<FullStop>。</FullStop>
      </Callout>
      <Layer width="1024" height="470" aria-hidden="true">
        <path d="M657 262L669 234L673 262" fill="#fff" />
        <path d="M656 260L669 234L673 260" fill="none" stroke="#e8141c" strokeWidth="2" />
        <path
          d="M620 230L256 307L254 301L231 320L261 325L257 321z"
          fill="#f00"
          style={{ filter: 'drop-shadow(1px 2px 2px #0007)' }}
        />
      </Layer>
    </Screen>
  </>
);

export default App;
